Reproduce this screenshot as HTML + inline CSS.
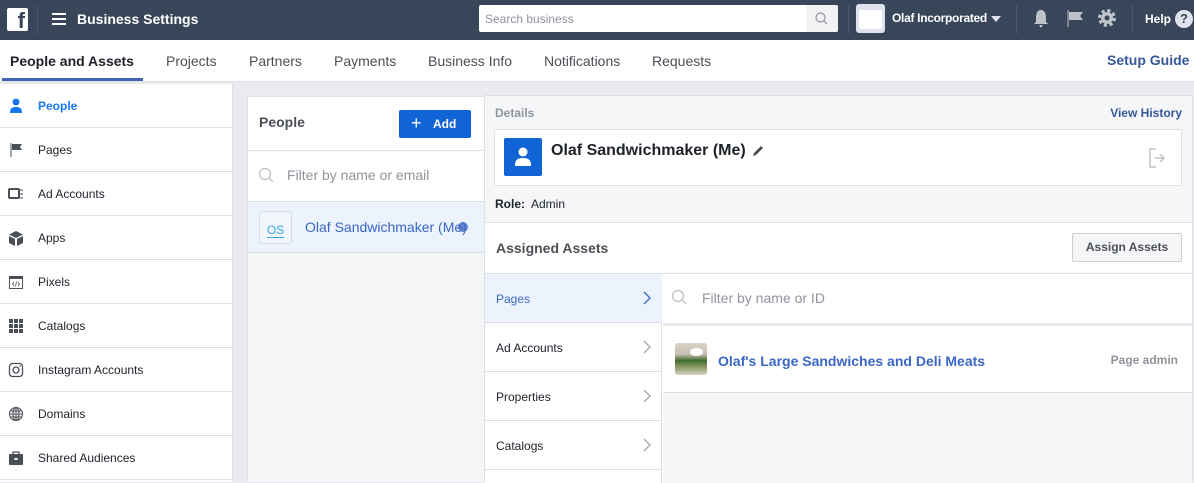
<!DOCTYPE html>
<html><head><meta charset="utf-8"><style>
*{box-sizing:border-box;margin:0;padding:0}
body{width:1194px;height:482px;overflow:hidden;background:#e9ebee;font-family:"Liberation Sans",Arial,sans-serif;font-size:12px;color:#1d2129;position:relative}
.abs{position:absolute}
.top{left:0;top:0;width:1194px;height:40px;background:#394659}
.tabs{left:0;top:40px;width:1194px;height:42px;background:#fff;border-bottom:1px solid #dddfe2}
.tab{position:absolute;top:13px;font-size:14px;color:#4b4f56}
.side{left:0;top:84px;width:233px;height:398px;background:#fff;border-right:1px solid #dddfe2}
.srow{position:absolute;left:0;width:233px;height:44px;border-bottom:1px solid #dddfe2;font-size:12px;color:#1d2129}
.srow span{position:absolute;left:38px;top:15px}
.srow svg{position:absolute;left:8px;top:14px}
.ar{position:absolute;left:0;width:177px;height:49px;border-bottom:1px solid #dddfe2;font-size:12px;color:#1d2129}
.ar span{position:absolute;left:11px;top:18px}
.ar svg{position:absolute;right:10px;top:16px}
</style></head><body>
<div class="abs top">
 <div class="abs" style="left:7px;top:8px;width:21px;height:23px;background:#fff;border-radius:2px;color:#394659;font-weight:bold;font-size:22px;line-height:26px;text-align:right;padding-right:3px;overflow:hidden">f</div>
 <div class="abs" style="left:37px;top:5px;width:1px;height:30px;background:#4c596b"></div>
 <div class="abs" style="left:52px;top:13px;width:14px;height:2px;background:#fff;box-shadow:0 5px 0 #fff,0 10px 0 #fff"></div>
 <div class="abs" style="left:77px;top:11px;color:#fff;font-size:14px;font-weight:bold">Business Settings</div>
 <div class="abs" style="left:479px;top:5px;width:359px;height:27px;background:#fff;border-radius:2px"><span class="abs" style="left:6px;top:7px;color:#90949c;font-size:12px">Search business</span>
  <div class="abs" style="right:0;top:0;width:32px;height:27px;background:#f1f2f4;border-radius:0 2px 2px 0"><svg class="abs" style="left:9px;top:7px" width="13" height="13"><circle cx="5.5" cy="5.5" r="4.5" fill="none" stroke="#90949c" stroke-width="1.2"/><line x1="9" y1="9" x2="12" y2="12" stroke="#90949c" stroke-width="1.2"/></svg></div></div>
 <div class="abs" style="left:848px;top:5px;width:1px;height:29px;background:#4c596b"></div>
 <div class="abs" style="left:856px;top:4px;width:29px;height:29px;background:#dfe3ee;border-radius:3px"><div class="abs" style="left:3px;top:6px;width:23px;height:19px;background:#fff;border-radius:1px"></div></div>
 <div class="abs" style="left:892px;top:11px;color:#fff;font-size:12px;font-weight:bold;letter-spacing:-0.3px">Olaf Incorporated</div>
 <div class="abs" style="left:991px;top:16px;border-left:5px solid transparent;border-right:5px solid transparent;border-top:6px solid #dfe3ee"></div>
 <div class="abs" style="left:1016px;top:5px;width:1px;height:29px;background:#4c596b"></div>
 <svg class="abs" style="left:1032px;top:8px" width="18" height="22"><path d="M9 2C5 2 4 6 4 10V14L2 16H16L14 14V10C14 6 13 2 9 2Z M7 17H11L9 20Z" fill="#bec3c9"/></svg>
 <svg class="abs" style="left:1066px;top:9px" width="20" height="20"><path d="M2 1V18" stroke="#bec3c9" stroke-width="1"/><path d="M3 3H17L14 7L17 11H3Z" fill="#bec3c9"/></svg>
 <svg class="abs" style="left:1097px;top:8px" width="20" height="20"><circle cx="10" cy="10" r="7" fill="none" stroke="#bec3c9" stroke-width="4" stroke-dasharray="3 2.5"/><circle cx="10" cy="10" r="6" fill="#bec3c9"/><circle cx="10" cy="10" r="2.5" fill="#394659"/></svg>
 <div class="abs" style="left:1132px;top:5px;width:1px;height:29px;background:#4c596b"></div>
 <div class="abs" style="left:1145px;top:12px;color:#fff;font-size:12px;font-weight:bold">Help</div>
 <div class="abs" style="left:1175px;top:10px;width:18px;height:18px;border-radius:50%;background:#dfe3ee;color:#394659;font-weight:bold;font-size:13px;text-align:center;line-height:18px">?</div>
</div>
<div class="abs tabs">
 <div class="tab" style="left:10px;color:#1d2129;font-weight:bold">People and Assets</div>
 <div class="abs" style="left:2px;top:38px;width:141px;height:3px;background:#4267b2"></div>
 <div class="tab" style="left:166px">Projects</div>
 <div class="tab" style="left:249px">Partners</div>
 <div class="tab" style="left:334px">Payments</div>
 <div class="tab" style="left:428px">Business Info</div>
 <div class="tab" style="left:544px">Notifications</div>
 <div class="tab" style="left:652px">Requests</div>
 <div class="tab" style="left:1107px;top:12px;color:#365899;font-weight:bold">Setup Guide</div>
</div>
<div class="abs side">
 <div class="srow" style="top:0"><svg width="16" height="16"><circle cx="8" cy="4" r="3.5" fill="#1877f2"/><path d="M2 15C2 10 4 9 8 9S14 10 14 15Z" fill="#1877f2"/></svg><span style="color:#1877f2;font-weight:bold">People</span></div>
 <div class="srow" style="top:44px"><svg width="16" height="16"><path d="M3 1V15" stroke="#4b4f56"/><path d="M4 2H14L12 5L14 8H4Z" fill="#4b4f56"/></svg><span>Pages</span></div>
 <div class="srow" style="top:88px"><svg width="16" height="16"><rect x="1" y="3" width="10" height="9" rx="1" fill="none" stroke="#4b4f56" stroke-width="2"/><path d="M12 4H15M12 8H15M12 12H15" stroke="#4b4f56"/></svg><span>Ad Accounts</span></div>
 <div class="srow" style="top:132px"><svg width="16" height="16"><path d="M8 1L15 4.5L8 8L1 4.5Z M1 6L7 9V16L1 13Z M9 9L15 6V13L9 16Z" fill="#4b4f56"/></svg><span>Apps</span></div>
 <div class="srow" style="top:176px"><svg width="16" height="16"><rect x="1.5" y="2.5" width="13" height="12" fill="none" stroke="#4b4f56"/><path d="M1 3H15V5H1Z" fill="#4b4f56"/><path d="M6 8L4.5 10L6 12M10 8L11.5 10L10 12M8.5 7.5L7.5 12.5" stroke="#4b4f56" stroke-width=".8" fill="none"/></svg><span>Pixels</span></div>
 <div class="srow" style="top:220px"><svg width="16" height="16"><g fill="#4b4f56"><rect x="1" y="1" width="4" height="4"/><rect x="6" y="1" width="4" height="4"/><rect x="11" y="1" width="4" height="4"/><rect x="1" y="6" width="4" height="4"/><rect x="6" y="6" width="4" height="4"/><rect x="11" y="6" width="4" height="4"/><rect x="1" y="11" width="4" height="4"/><rect x="6" y="11" width="4" height="4"/><rect x="11" y="11" width="4" height="4"/></g></svg><span>Catalogs</span></div>
 <div class="srow" style="top:264px"><svg width="16" height="16"><rect x="1.5" y="1.5" width="13" height="13" rx="3" fill="none" stroke="#4b4f56" stroke-width="1.3"/><circle cx="8" cy="8" r="3" fill="none" stroke="#4b4f56" stroke-width="1.3"/><circle cx="12" cy="4" r=".8" fill="#4b4f56"/></svg><span>Instagram Accounts</span></div>
 <div class="srow" style="top:308px"><svg width="16" height="16"><g fill="none" stroke="#4b4f56" stroke-width="1.1"><circle cx="8" cy="8" r="6.5"/><ellipse cx="8" cy="8" rx="3" ry="6.5"/><path d="M1.5 8H14.5M2.5 5H13.5M2.5 11H13.5M8 1.5V14.5"/></g></svg><span>Domains</span></div>
 <div class="srow" style="top:352px"><svg width="16" height="16"><path d="M5 4V2H11V4" fill="none" stroke="#4b4f56" stroke-width="1.3"/><rect x="1" y="4" width="14" height="11" rx="1" fill="#4b4f56"/><rect x="6.5" y="8" width="3" height="2" fill="#fff"/></svg><span>Shared Audiences</span></div>
</div>
<!-- people panel -->
<div class="abs" style="left:247px;top:96px;width:237px;height:386px;background:#f5f6f7;border:1px solid #dddfe2;border-right:none;border-bottom:none">
 <div class="abs" style="left:0;top:0;width:236px;height:104px;background:#fff"></div>
 <div class="abs" style="left:11px;top:17px;font-size:14px;font-weight:bold;color:#4b4f56">People</div>
 <div class="abs" style="left:151px;top:13px;width:72px;height:28px;background:#1064d6;border-radius:2px;color:#fff;font-weight:bold;font-size:12px"><span class="abs" style="left:12px;top:3px;font-size:18px;font-weight:normal">+</span><span class="abs" style="left:34px;top:7px">Add</span></div>
 <div class="abs" style="left:0;top:53px;width:236px;height:1px;background:#dddfe2"></div>
 <svg class="abs" style="left:10px;top:70px" width="18" height="18"><circle cx="7" cy="7" r="5.5" fill="none" stroke="#bec3c9" stroke-width="1.3"/><line x1="11" y1="11" x2="15" y2="15" stroke="#bec3c9" stroke-width="1.3"/></svg>
 <div class="abs" style="left:39px;top:70px;font-size:14px;color:#90949c">Filter by name or email</div>
 <div class="abs" style="left:0;top:104px;width:236px;height:52px;background:#ecf3fc;border-top:1px solid #dddfe2;border-bottom:1px solid #dddfe2"></div>
 <div class="abs" style="left:11px;top:114px;width:33px;height:33px;background:#f1f6fb;border:1px solid #d3dde9;border-radius:3px;color:#35a6e8;font-size:12px;text-align:center"><span style="position:relative;top:11px;border-bottom:1.5px solid #35a6e8">OS</span></div>
 <div class="abs" style="left:57px;top:122px;font-size:14px;color:#3b67c4;width:163px;overflow:hidden;white-space:nowrap">Olaf Sandwichmaker (Me)</div>
 <div class="abs" style="left:210px;top:125px;width:10px;height:10px;border-radius:50%;background:#3b67c4;opacity:.8"></div>
</div>
<!-- details -->
<div class="abs" style="left:484px;top:95px;width:709px;height:387px;background:#f5f6f7;border:1px solid #dddfe2;border-bottom:none">
 <div class="abs" style="left:10px;top:10px;font-size:12px;font-weight:bold;color:#90949c">Details</div>
 <div class="abs" style="right:10px;top:10px;font-size:12px;font-weight:bold;color:#365899">View History</div>
 <div class="abs" style="left:9px;top:33px;width:688px;height:57px;background:#fff;border:1px solid #dddfe2;border-radius:3px">
  <div class="abs" style="left:9px;top:8px;width:38px;height:38px;background:#1064d6;border-radius:2px"><svg class="abs" style="left:10px;top:9px" width="18" height="20"><circle cx="9" cy="5" r="4.5" fill="#fff"/><path d="M1 19C1 13 3 11 9 11S17 13 17 19Z" fill="#fff"/></svg></div>
  <div class="abs" style="left:56px;top:12px;font-size:16px;font-weight:bold;color:#1d2129">Olaf Sandwichmaker (Me)</div>
  <svg class="abs" style="left:256px;top:14px" width="14" height="14"><path d="M2 12L3 9L10 2L12 4L5 11Z" fill="#4b4f56"/></svg>
  <svg class="abs" style="left:652px;top:17px" width="22" height="22"><path d="M9 2H3V20H9" fill="none" stroke="#bec3c9" stroke-width="1.5"/><path d="M8 11H16M13 7L17 11L13 15" fill="none" stroke="#bec3c9" stroke-width="1.5"/></svg>
 </div>
 <div class="abs" style="left:10px;top:101px;font-size:12px"><b>Role:</b>&nbsp; Admin</div>
 <div class="abs" style="left:0;top:126px;width:707px;height:261px;background:#fff;border-top:1px solid #dddfe2"></div>
 <div class="abs" style="left:11px;top:144px;font-size:14px;font-weight:bold;color:#4b4f56">Assigned Assets</div>
 <div class="abs" style="left:587px;top:137px;width:110px;height:29px;background:#f5f6f7;border:1px solid #ccd0d5;border-radius:2px;font-size:12px;font-weight:bold;color:#4b4f56;text-align:center;line-height:27px">Assign Assets</div>
 <div class="abs" style="left:0;top:177px;width:707px;height:1px;background:#dddfe2"></div>
 <div class="abs" style="left:0;top:178px;width:177px;height:209px;border-right:1px solid #dddfe2">
  <div class="ar" style="top:0;background:#ecf3fc"><span style="color:#3b67c4">Pages</span><svg width="10" height="16"><path d="M2 2L8 8L2 14" fill="none" stroke="#3b67c4" stroke-width="1.3"/></svg></div>
  <div class="ar" style="top:49px"><span>Ad Accounts</span><svg width="10" height="16"><path d="M2 2L8 8L2 14" fill="none" stroke="#90949c" stroke-width="1.1"/></svg></div>
  <div class="ar" style="top:98px"><span>Properties</span><svg width="10" height="16"><path d="M2 2L8 8L2 14" fill="none" stroke="#90949c" stroke-width="1.1"/></svg></div>
  <div class="ar" style="top:147px"><span>Catalogs</span><svg width="10" height="16"><path d="M2 2L8 8L2 14" fill="none" stroke="#90949c" stroke-width="1.1"/></svg></div>
 </div>
 <svg class="abs" style="left:186px;top:193px" width="18" height="18"><circle cx="7" cy="7" r="5.5" fill="none" stroke="#bec3c9" stroke-width="1.3"/><line x1="11" y1="11" x2="15" y2="15" stroke="#bec3c9" stroke-width="1.3"/></svg>
 <div class="abs" style="left:217px;top:194px;font-size:14px;color:#90949c">Filter by name or ID</div>
 <div class="abs" style="left:178px;top:227px;width:529px;height:3px;background:#e9ebee"></div>
 <div class="abs" style="left:178px;top:296px;width:529px;height:91px;background:#f5f6f7;border-top:1px solid #dddfe2"></div>
 <div class="abs" style="left:190px;top:247px;width:32px;height:32px;border-radius:3px;background:linear-gradient(180deg,#d8d2c8 0,#c9bfb3 35%,#3f6b2c 55%,#7a8f55 70%,#d9d2c6 100%)"><div class="abs" style="left:15px;top:5px;width:13px;height:8px;border-radius:50%;background:#fff"></div></div>
 <div class="abs" style="left:233px;top:257px;font-size:14px;font-weight:bold;color:#3b67c4">Olaf's Large Sandwiches and Deli Meats</div>
 <div class="abs" style="right:14px;top:257px;font-size:12px;font-weight:bold;color:#90949c">Page admin</div>
</div>
</body></html>
